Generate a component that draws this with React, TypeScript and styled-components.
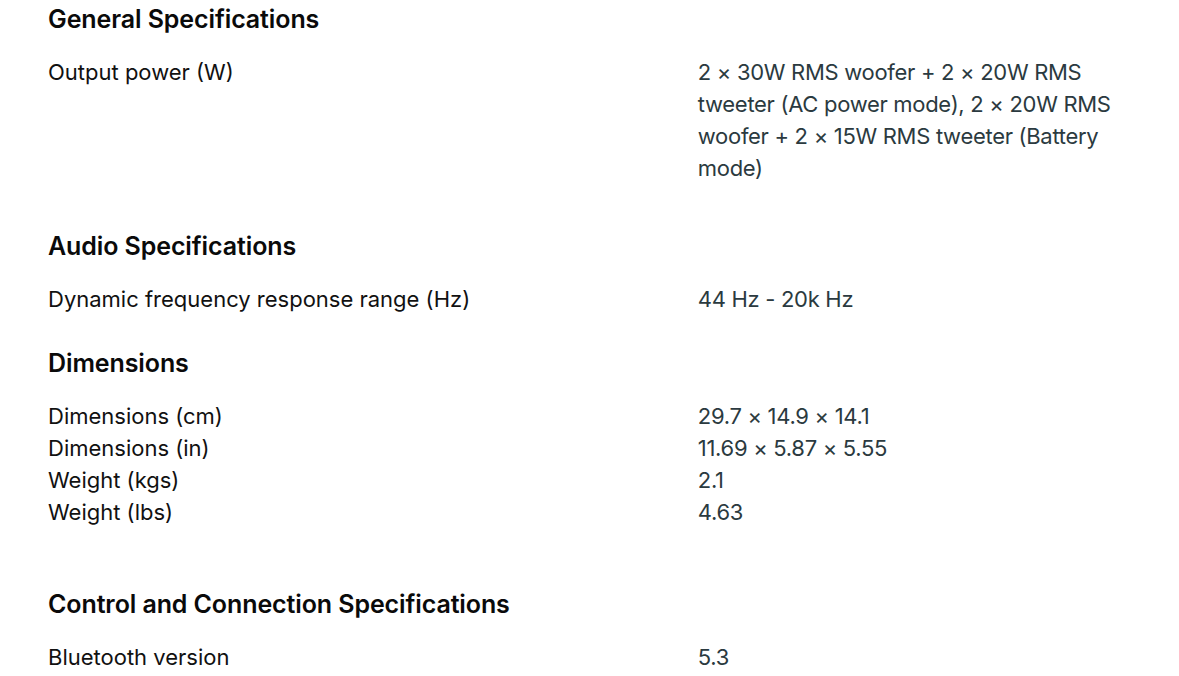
import React from "react";
import styled, { createGlobalStyle } from "styled-components";

const Global = createGlobalStyle`
  html, body { margin: 0; padding: 0; background: #ffffff; }
  body { font-family: Inter, "Noto Sans", "Liberation Sans", sans-serif; -webkit-font-smoothing: antialiased; }
`;

const Page = styled.div`
  padding: 5px 48px 0 48px;
  display: flex;
  flex-direction: column;
`;

const Section = styled.section<{ $spaceBefore: number }>`
  display: flex;
  flex-direction: column;
  gap: 23px;
  margin-top: ${(p) => p.$spaceBefore}px;
`;

const Heading = styled.h3`
  margin: 0;
  font-size: 25px;
  line-height: 28px;
  font-weight: 600;
  color: #0a0a0a;
  letter-spacing: -0.1px;
`;

const Rows = styled.dl`
  margin: 0;
  display: flex;
  flex-direction: column;
`;

const Row = styled.div`
  display: grid;
  grid-template-columns: 60% 40%;
  font-size: 22px;
  line-height: 32px;
`;

const Label = styled.dt`
  margin: 0;
  color: #111111;
`;

const Value = styled.dd`
  margin: 0;
  color: #2b3a40;
  letter-spacing: -0.3px;
`;

const data: { title: string; space: number; rows: [string, string][] }[] = [
  {
    title: "General Specifications",
    space: 0,
    rows: [
      [
        "Output power (W)",
        "2 × 30W RMS woofer + 2 × 20W RMS tweeter (AC power mode), 2 × 20W RMS woofer + 2 × 15W RMS tweeter (Battery mode)",
      ],
    ],
  },
  {
    title: "Audio Specifications",
    space: 48,
    rows: [["Dynamic frequency response range (Hz)", "44 Hz - 20k Hz"]],
  },
  {
    title: "Dimensions",
    space: 34,
    rows: [
      ["Dimensions (cm)", "29.7 × 14.9 × 14.1"],
      ["Dimensions (in)", "11.69 × 5.87 × 5.55"],
      ["Weight (kgs)", "2.1"],
      ["Weight (lbs)", "4.63"],
    ],
  },
  {
    title: "Control and Connection Specifications",
    space: 62,
    rows: [["Bluetooth version", "5.3"]],
  },
];

export default function App() {
  return (
    <>
      <Global />
      <Page>
        {data.map((s) => (
          <Section key={s.title} $spaceBefore={s.space}>
            <Heading>{s.title}</Heading>
            <Rows>
              {s.rows.map(([l, v]) => (
                <Row key={l}>
                  <Label>{l}</Label>
                  <Value>{v}</Value>
                </Row>
              ))}
            </Rows>
          </Section>
        ))}
      </Page>
    </>
  );
}
